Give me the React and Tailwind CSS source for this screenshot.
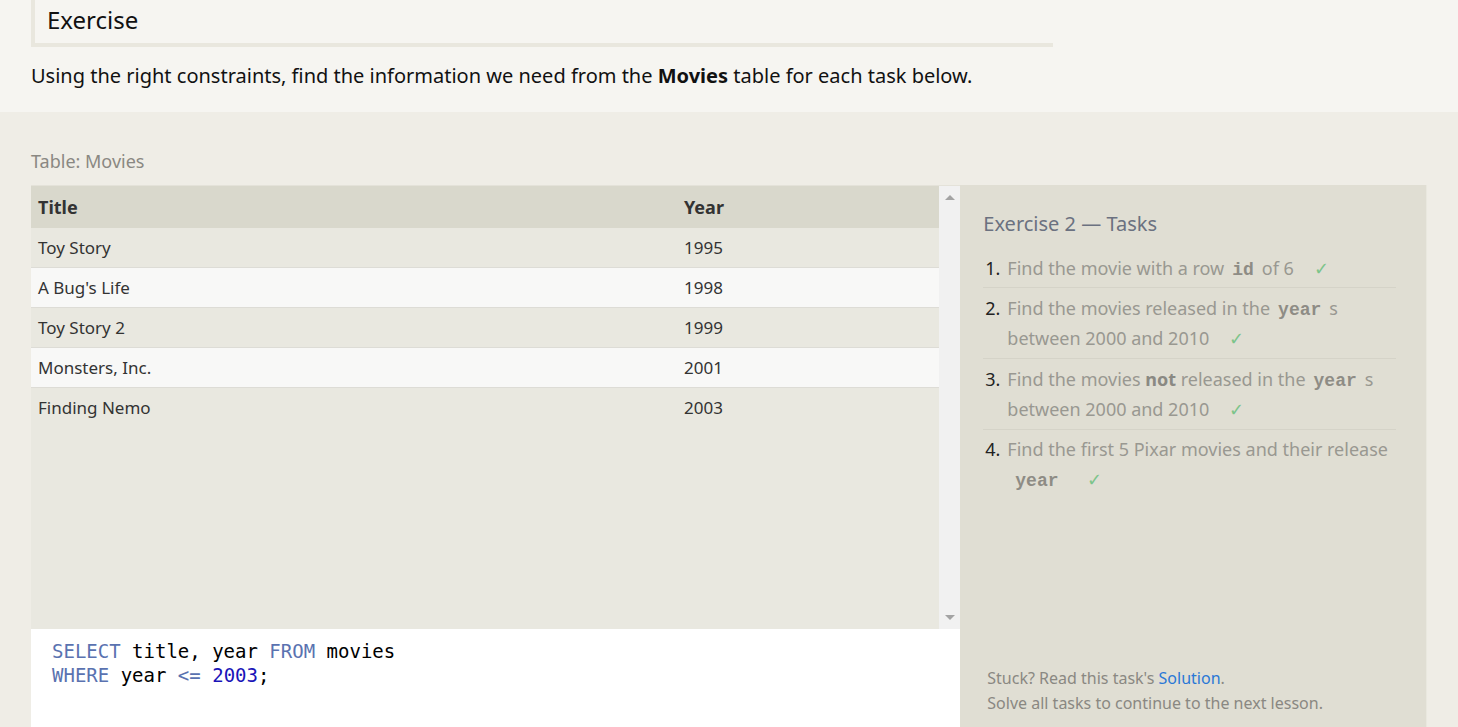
import React from 'react';

const movies = [
  { title: 'Toy Story', year: 1995 },
  { title: "A Bug's Life", year: 1998 },
  { title: 'Toy Story 2', year: 1999 },
  { title: 'Monsters, Inc.', year: 2001 },
  { title: 'Finding Nemo', year: 2003 },
];

const Check = () => <span className="ml-5 text-[#7cc48a]">✓</span>;

const Code = ({ children }) => (
  <code className="mx-2 font-bold text-[#8e8c85] text-[18px] leading-[20px]" style={{ fontFamily: '"Liberation Mono", monospace' }}>
    {children}
  </code>
);

const App = () => {
  return (
    <div className="h-[727px] overflow-hidden bg-[#efede6] text-[#222]" style={{ fontFamily: '"Noto Sans", "Open Sans", sans-serif' }}>
      {/* Header area */}
      <div className="bg-[#f6f5f1] px-[31px] pb-[22px]">
        <div className="w-[1022px] border-l-4 border-b-4 border-[#e9e7de] pl-3 pt-[3px] pb-[6px] text-[24px] leading-[34px] text-[#111]">
          Exercise
        </div>
        <p className="mt-[15px] text-[20px] leading-[28px] text-[#111]">
          Using the right constraints, find the information we need from the <b>Movies</b> table for each task below.
        </p>
      </div>

      {/* Exercise area */}
      <div className="px-[31px] pt-[36px]">
        <div className="mb-[10px] text-[18px] leading-[27px] text-[#8a8882]">Table: Movies</div>
        <div className="flex">
          <div className="flex w-[930px] flex-col">
            <div className="flex h-[444px] border-t border-[#e4e2d9]">
              <div className="flex-1 bg-[#e9e8e0]">
                <div className="flex h-[42px] items-center bg-[#d9d8cc] text-[18px] font-bold text-[#333]">
                  <div className="w-[653px] pl-[7px]">Title</div>
                  <div>Year</div>
                </div>
                {movies.map((m, i) => (
                  <div
                    key={m.title}
                    className={`flex h-[40px] items-center text-[17px] text-[#333] ${i < movies.length - 1 ? 'border-b border-[#dddcd6]' : ''} ${i % 2 === 0 ? 'bg-[#e9e8e0]' : 'bg-[#f8f8f7]'}`}
                  >
                    <div className="w-[653px] pl-[7px]">{m.title}</div>
                    <div>{m.year}</div>
                  </div>
                ))}
              </div>
              {/* scrollbar */}
              <div className="flex w-[21px] flex-col items-center justify-between bg-[#f1f1f1] py-[9px]">
                <div className="h-0 w-0 border-x-[5px] border-b-[5px] border-x-transparent border-b-[#a3a3a3]" />
                <div className="h-0 w-0 border-x-[5px] border-t-[5px] border-x-transparent border-t-[#a3a3a3]" />
              </div>
            </div>
            <div
              className="h-[98px] bg-white px-[21px] pt-[10px] text-[19px] leading-[24px] text-black"
              style={{ fontFamily: '"DejaVu Sans Mono", monospace' }}
            >
              <div>
                <span className="text-[#5a72b0]">SELECT</span> title, year <span className="text-[#5a72b0]">FROM</span> movies
              </div>
              <div>
                <span className="text-[#5a72b0]">WHERE</span> year <span className="text-[#5a72b0]">&lt;=</span>{' '}
                <span className="text-[#1a14b8]">2003</span>;
              </div>
            </div>
          </div>

          {/* Tasks panel */}
          <div className="flex w-[467px] flex-col justify-between border-r border-[#e9e8df] bg-[#e0ded3] pl-[23px] pr-[30px] pt-[24px] pb-[11px]">
            <div>
              <div className="text-[20px] leading-[30px] text-[#6b7180]">Exercise 2 — Tasks</div>
              <ol className="mt-[14px] text-[18px] leading-[30px] text-[#999891]">
                <li className="flex border-b border-[#d5d3c8] pb-[4px]">
                  <span className="w-[24px] shrink-0 pl-[2px] text-[#222]">1.</span>
                  <span>
                    Find the movie with a row<Code>id</Code>of 6<Check />
                  </span>
                </li>
                <li className="flex border-b border-[#d5d3c8] py-[5px]">
                  <span className="w-[24px] shrink-0 pl-[2px] text-[#222]">2.</span>
                  <span>
                    Find the movies released in the<Code>year</Code>s between 2000 and 2010<Check />
                  </span>
                </li>
                <li className="flex border-b border-[#d5d3c8] py-[5px]">
                  <span className="w-[24px] shrink-0 pl-[2px] text-[#222]">3.</span>
                  <span>
                    Find the movies <b className="text-[#8a8983]">not</b> released in the<Code>year</Code>s between 2000 and 2010<Check />
                  </span>
                </li>
                <li className="flex py-[4px]">
                  <span className="w-[24px] shrink-0 pl-[2px] text-[#222]">4.</span>
                  <span>
                    Find the first 5 Pixar movies and their release <Code>year</Code><Check />
                  </span>
                </li>
              </ol>
            </div>
            <div className="pl-[4px] text-[16px] leading-[25px] text-[#8a8882]">
              <div>
                Stuck? Read this task's <span className="text-[#2a78d6]">Solution</span>.
              </div>
              <div>Solve all tasks to continue to the next lesson.</div>
            </div>
          </div>
        </div>
      </div>
    </div>
  );
};

export default App;
